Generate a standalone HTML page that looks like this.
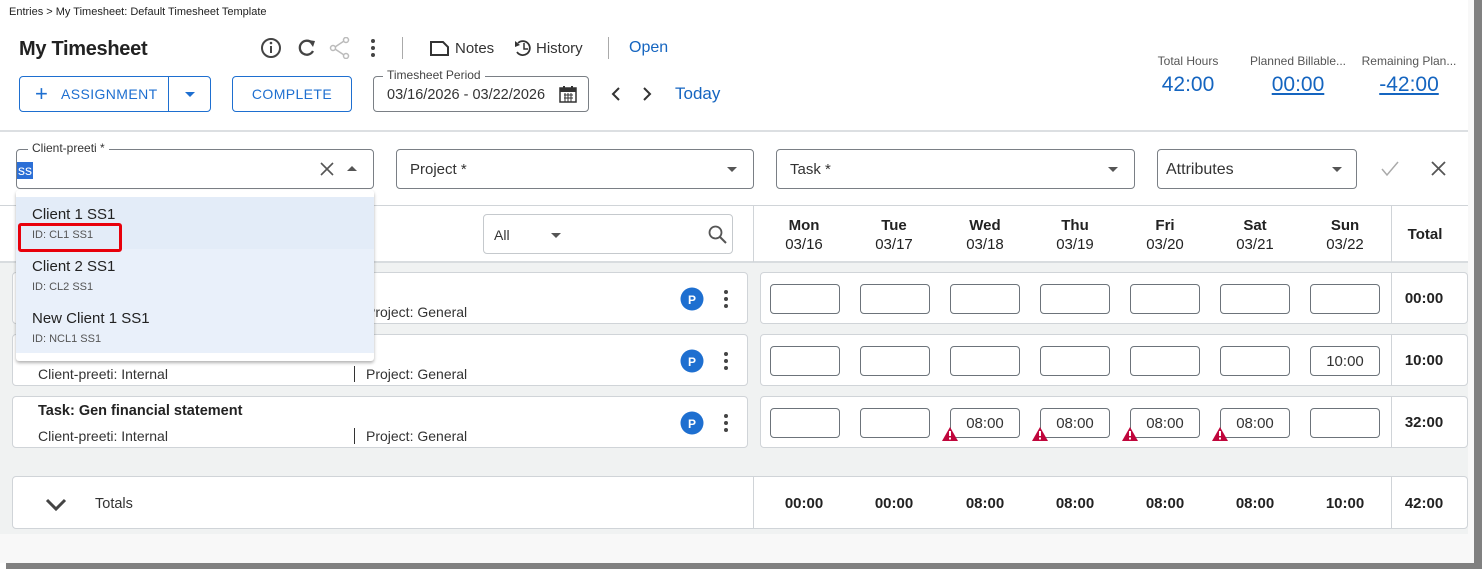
<!DOCTYPE html>
<html><head><meta charset="utf-8">
<style>
*{box-sizing:border-box;margin:0;padding:0}
body{width:1482px;height:569px;overflow:hidden;background:#fff;font-family:"Liberation Sans",sans-serif;color:#222;position:relative}
.a{position:absolute}
.blue{color:#1565c0}
.fld{position:absolute;border:1px solid #7a7f85;border-radius:4px;background:#fff}
.caret{position:absolute;width:0;height:0;border-left:5px solid transparent;border-right:5px solid transparent;border-top:5px solid #555}
.card{position:absolute;background:#fff;border:1px solid #d0d4d8;border-radius:4px}
.inp{position:absolute;width:70px;height:30px;border:1px solid #6c737a;border-radius:4px;background:#fff;font-size:15px;color:#333;text-align:center;line-height:28px}
.day{position:absolute;top:216px;width:80px;text-align:center;font-size:15px;font-weight:bold;line-height:19px;color:#222}
.tot{position:absolute;width:70px;text-align:center;font-size:15px;font-weight:bold}
.warn{position:absolute;width:16px;height:14px}
.sub{font-size:14px;color:#333}
</style></head><body>
<div class="a" style="left:0;top:262px;width:1468px;height:272px;background:#f0f2f2"></div>
<div class="a" style="left:0;top:534px;width:1474px;height:29px;background:#f8f8f8"></div>
<div class="a" style="left:1468px;top:0;width:6px;height:563px;background:#f8f8f8"></div>
<div class="a" style="left:1474px;top:0;width:8px;height:569px;background:#808080"></div>
<div class="a" style="left:6px;top:563px;width:1476px;height:6px;background:#808080"></div>

<div class="a" style="left:9px;top:6px;font-size:11px;color:#222">Entries &gt; My Timesheet: Default Timesheet Template</div>
<div class="a" style="left:19px;top:38px;font-size:20px;font-weight:bold;color:#222;letter-spacing:-0.3px">My Timesheet</div>

<svg class="a" style="left:260px;top:37px" width="420" height="22">
 <circle cx="11" cy="11" r="9" fill="none" stroke="#444" stroke-width="2"/><rect x="10" y="9" width="2" height="7" fill="#444"/><circle cx="11" cy="6" r="1.3" fill="#444"/>
 <path d="M52 6 A7 7 0 1 0 53 14" fill="none" stroke="#444" stroke-width="2.3"/><path d="M48 3 L55 4 L53 10 Z" fill="#444"/>
 <g stroke="#bbb" stroke-width="1.5" fill="none"><circle cx="86" cy="3" r="2.5"/><circle cx="73" cy="11" r="2.5"/><circle cx="86" cy="19" r="2.5"/><path d="M84 4 L75 10 M75 12 L84 18"/></g>
 <circle cx="113" cy="4" r="2" fill="#444"/><circle cx="113" cy="11" r="2" fill="#444"/><circle cx="113" cy="18" r="2" fill="#444"/>
 <rect x="142" y="0" width="1" height="22" fill="#aaa"/>
 <path d="M171 5 L183 5 L188 10 L188 18 L171 18 Z" fill="none" stroke="#333" stroke-width="2"/>
 <path d="M258 6 A7 7 0 1 1 257 15" fill="none" stroke="#333" stroke-width="1.8"/><path d="M255 4 L255 10 L260 8" fill="#333"/><path d="M264 6 L264 12 L268 12" fill="none" stroke="#333" stroke-width="1.5"/>
 <rect x="348" y="0" width="1" height="22" fill="#aaa"/>
</svg>
<div class="a" style="left:455px;top:40px;font-size:15px;color:#333">Notes</div>
<div class="a" style="left:536px;top:40px;font-size:15px;color:#333">History</div>
<div class="a blue" style="left:629px;top:39px;font-size:16px">Open</div>

<div class="a" style="left:19px;top:76px;width:192px;height:36px;border:1px solid #1e6fd0;border-radius:4px"></div>
<div class="a" style="left:168px;top:76px;width:1px;height:36px;background:#1e6fd0"></div>
<div class="a" style="left:35px;top:84px;font-size:22px;color:#1e6fd0;line-height:20px">+</div>
<div class="a" style="left:61px;top:86px;font-size:14px;color:#1e6fd0;letter-spacing:0.4px">ASSIGNMENT</div>
<div class="caret" style="left:185px;top:92px;border-top-color:#1e6fd0"></div>
<div class="a" style="left:232px;top:76px;width:120px;height:36px;border:1px solid #1e6fd0;border-radius:4px;font-size:14px;color:#1e6fd0;text-align:center;line-height:34px;letter-spacing:0.4px">COMPLETE</div>
<div class="fld" style="left:373px;top:76px;width:216px;height:36px"></div>
<div class="a" style="left:383px;top:68px;padding:0 4px;background:#fff;font-size:12px;color:#444">Timesheet Period</div>
<div class="a" style="left:387px;top:87px;font-size:14.5px;color:#333">03/16/2026 - 03/22/2026</div>
<svg class="a" style="left:559px;top:85px" width="18" height="18"><rect x="1" y="3" width="16" height="14" fill="none" stroke="#333" stroke-width="1.5"/><rect x="1" y="3" width="16" height="4" fill="#333"/><path d="M5 10h9M5 13h9M6 8v9M9 8v9M12 8v9" stroke="#333" stroke-width="1"/><rect x="4" y="1" width="2" height="4" fill="#333"/><rect x="12" y="1" width="2" height="4" fill="#333"/></svg>
<svg class="a" style="left:608px;top:86px" width="50" height="16"><path d="M11 2 L5 8 L11 14" fill="none" stroke="#333" stroke-width="2"/><path d="M36 2 L42 8 L36 14" fill="none" stroke="#333" stroke-width="2"/></svg>
<div class="a blue" style="left:675px;top:84px;font-size:17px">Today</div>

<div class="a" style="left:1138px;top:54px;width:100px;text-align:center;font-size:12px;color:#555">Total Hours</div>
<div class="a blue" style="left:1138px;top:73px;width:100px;text-align:center;font-size:21px">42:00</div>
<div class="a" style="left:1243px;top:54px;width:110px;text-align:center;font-size:12px;color:#555">Planned Billable...</div>
<div class="a blue" style="left:1243px;top:73px;width:110px;text-align:center;font-size:21px;text-decoration:underline">00:00</div>
<div class="a" style="left:1355px;top:54px;width:108px;text-align:center;font-size:12px;color:#555">Remaining Plan...</div>
<div class="a blue" style="left:1355px;top:73px;width:108px;text-align:center;font-size:21px;text-decoration:underline">-42:00</div>

<div class="a" style="left:0;top:130px;width:1468px;height:2px;background:#dcdfe2"></div>

<div class="fld" style="left:16px;top:149px;width:358px;height:40px"></div>
<div class="a" style="left:28px;top:141px;padding:0 4px;background:#fff;font-size:12px;color:#333">Client-preeti *</div>
<div class="a" style="left:17px;top:162px;background:#2c6fd6;color:#fff;font-size:14px;line-height:17px;padding:0 1px">ss</div>
<svg class="a" style="left:320px;top:162px" width="14" height="14"><path d="M1 1L13 13M13 1L1 13" stroke="#555" stroke-width="1.6"/></svg>
<div class="a" style="left:347px;top:166px;width:0;height:0;border-left:5px solid transparent;border-right:5px solid transparent;border-bottom:5px solid #555"></div>
<div class="fld" style="left:396px;top:149px;width:358px;height:40px"></div>
<div class="a" style="left:410px;top:161px;font-size:15px;color:#333">Project *</div>
<div class="caret" style="left:727px;top:167px"></div>
<div class="fld" style="left:776px;top:149px;width:359px;height:40px"></div>
<div class="a" style="left:790px;top:161px;font-size:15px;color:#333">Task *</div>
<div class="caret" style="left:1108px;top:167px"></div>
<div class="fld" style="left:1157px;top:149px;width:200px;height:40px"></div>
<div class="a" style="left:1166px;top:161px;font-size:16px;color:#333">Attributes</div>
<div class="caret" style="left:1332px;top:167px"></div>
<svg class="a" style="left:1380px;top:160px" width="70" height="18"><path d="M2 9 L7 15 L18 2" fill="none" stroke="#aaa" stroke-width="1.5"/><path d="M52 2L65 15M65 2L52 15" stroke="#555" stroke-width="1.8"/></svg>

<div class="a" style="left:0;top:205px;width:1468px;height:1px;background:#d0d4d8"></div>
<div class="a" style="left:0;top:261px;width:1468px;height:2px;background:#d8dcdf"></div>
<div class="a" style="left:753px;top:206px;width:1px;height:56px;background:#d0d4d8"></div>
<div class="a" style="left:1391px;top:206px;width:1px;height:56px;background:#d0d4d8"></div>
<div class="fld" style="left:483px;top:214px;width:250px;height:40px;border-color:#c5c9cd"></div>
<div class="a" style="left:494px;top:227px;font-size:14px;color:#333">All</div>
<div class="caret" style="left:551px;top:233px"></div>
<svg class="a" style="left:708px;top:225px" width="20" height="20"><circle cx="7.5" cy="7.5" r="6" fill="none" stroke="#555" stroke-width="1.8"/><path d="M12 12 L18 18" stroke="#555" stroke-width="2"/></svg>
<div class="day" style="left:764px">Mon<br><span style="font-weight:normal">03/16</span></div>
<div class="day" style="left:854px">Tue<br><span style="font-weight:normal">03/17</span></div>
<div class="day" style="left:945px">Wed<br><span style="font-weight:normal">03/18</span></div>
<div class="day" style="left:1035px">Thu<br><span style="font-weight:normal">03/19</span></div>
<div class="day" style="left:1125px">Fri<br><span style="font-weight:normal">03/20</span></div>
<div class="day" style="left:1215px">Sat<br><span style="font-weight:normal">03/21</span></div>
<div class="day" style="left:1305px">Sun<br><span style="font-weight:normal">03/22</span></div>
<div class="a" style="left:1394px;top:226px;width:62px;text-align:center;font-size:15px;font-weight:bold">Total</div>

<div class="card" style="left:12px;top:272px;width:736px;height:52px"></div>
<div class="card" style="left:760px;top:272px;width:708px;height:52px"></div>
<div class="card" style="left:12px;top:334px;width:736px;height:52px"></div>
<div class="card" style="left:760px;top:334px;width:708px;height:52px"></div>
<div class="card" style="left:12px;top:396px;width:736px;height:52px"></div>
<div class="card" style="left:760px;top:396px;width:708px;height:52px"></div>
<div class="a" style="left:1391px;top:272px;width:1px;height:52px;background:#d0d4d8"></div>
<div class="a" style="left:1391px;top:334px;width:1px;height:52px;background:#d0d4d8"></div>
<div class="a" style="left:1391px;top:396px;width:1px;height:52px;background:#d0d4d8"></div>

<div class="a sub" style="left:366px;top:304px">Project: General</div>
<div class="a sub" style="left:38px;top:366px">Client-preeti: Internal</div>
<div class="a" style="left:354px;top:366px;width:1px;height:16px;background:#333"></div>
<div class="a sub" style="left:366px;top:366px">Project: General</div>
<div class="a" style="left:38px;top:403px;font-size:14.5px;font-weight:bold;color:#222">Task: Gen financial statement</div>
<div class="a sub" style="left:38px;top:428px">Client-preeti: Internal</div>
<div class="a" style="left:354px;top:428px;width:1px;height:16px;background:#333"></div>
<div class="a sub" style="left:366px;top:428px">Project: General</div>

<svg class="a" style="left:680px;top:287px" width="60" height="150">
 <g>
 <circle cx="12" cy="12" r="11.5" fill="#1e6fd0"/><text x="12" y="17" text-anchor="middle" font-size="12" font-weight="bold" fill="#fff" font-family="Liberation Sans">P</text>
 <circle cx="46" cy="5" r="2" fill="#444"/><circle cx="46" cy="12" r="2" fill="#444"/><circle cx="46" cy="19" r="2" fill="#444"/>
 </g>
 <g transform="translate(0,62)">
 <circle cx="12" cy="12" r="11.5" fill="#1e6fd0"/><text x="12" y="17" text-anchor="middle" font-size="12" font-weight="bold" fill="#fff" font-family="Liberation Sans">P</text>
 <circle cx="46" cy="5" r="2" fill="#444"/><circle cx="46" cy="12" r="2" fill="#444"/><circle cx="46" cy="19" r="2" fill="#444"/>
 </g>
 <g transform="translate(0,124)">
 <circle cx="12" cy="12" r="11.5" fill="#1e6fd0"/><text x="12" y="17" text-anchor="middle" font-size="12" font-weight="bold" fill="#fff" font-family="Liberation Sans">P</text>
 <circle cx="46" cy="5" r="2" fill="#444"/><circle cx="46" cy="12" r="2" fill="#444"/><circle cx="46" cy="19" r="2" fill="#444"/>
 </g>
</svg>

<div class="inp" style="left:770px;top:284px"></div><div class="inp" style="left:860px;top:284px"></div><div class="inp" style="left:950px;top:284px"></div><div class="inp" style="left:1040px;top:284px"></div><div class="inp" style="left:1130px;top:284px"></div><div class="inp" style="left:1220px;top:284px"></div><div class="inp" style="left:1310px;top:284px"></div>
<div class="tot" style="left:1389px;top:290px">00:00</div>
<div class="inp" style="left:770px;top:346px"></div><div class="inp" style="left:860px;top:346px"></div><div class="inp" style="left:950px;top:346px"></div><div class="inp" style="left:1040px;top:346px"></div><div class="inp" style="left:1130px;top:346px"></div><div class="inp" style="left:1220px;top:346px"></div><div class="inp" style="left:1310px;top:346px;line-height:30px">10:00</div>
<div class="tot" style="left:1389px;top:352px">10:00</div>
<div class="inp" style="left:770px;top:408px"></div><div class="inp" style="left:860px;top:408px"></div><div class="inp" style="left:950px;top:408px;line-height:30px">08:00</div><div class="inp" style="left:1040px;top:408px;line-height:30px">08:00</div><div class="inp" style="left:1130px;top:408px;line-height:30px">08:00</div><div class="inp" style="left:1220px;top:408px;line-height:30px">08:00</div><div class="inp" style="left:1310px;top:408px"></div>
<div class="tot" style="left:1389px;top:414px">32:00</div>
<svg class="warn" style="left:942px;top:427px" viewBox="0 0 16 14"><path d="M8 0 L16 14 L0 14 Z" fill="#c0063c"/><rect x="7" y="4" width="2" height="5" fill="#fff"/><rect x="7" y="10.5" width="2" height="2" fill="#fff"/></svg>
<svg class="warn" style="left:1032px;top:427px" viewBox="0 0 16 14"><path d="M8 0 L16 14 L0 14 Z" fill="#c0063c"/><rect x="7" y="4" width="2" height="5" fill="#fff"/><rect x="7" y="10.5" width="2" height="2" fill="#fff"/></svg>
<svg class="warn" style="left:1122px;top:427px" viewBox="0 0 16 14"><path d="M8 0 L16 14 L0 14 Z" fill="#c0063c"/><rect x="7" y="4" width="2" height="5" fill="#fff"/><rect x="7" y="10.5" width="2" height="2" fill="#fff"/></svg>
<svg class="warn" style="left:1212px;top:427px" viewBox="0 0 16 14"><path d="M8 0 L16 14 L0 14 Z" fill="#c0063c"/><rect x="7" y="4" width="2" height="5" fill="#fff"/><rect x="7" y="10.5" width="2" height="2" fill="#fff"/></svg>

<div class="card" style="left:12px;top:476px;width:1456px;height:53px"></div>
<div class="a" style="left:753px;top:476px;width:1px;height:53px;background:#d0d4d8"></div>
<div class="a" style="left:1391px;top:476px;width:1px;height:53px;background:#d0d4d8"></div>
<svg class="a" style="left:45px;top:498px" width="22" height="14"><path d="M2 2 L11 11 L20 2" fill="none" stroke="#444" stroke-width="3"/></svg>
<div class="a" style="left:95px;top:496px;font-size:14.5px;color:#333">Totals</div>
<div class="tot" style="left:769px;top:495px">00:00</div><div class="tot" style="left:859px;top:495px">00:00</div><div class="tot" style="left:950px;top:495px">08:00</div><div class="tot" style="left:1040px;top:495px">08:00</div><div class="tot" style="left:1130px;top:495px">08:00</div><div class="tot" style="left:1220px;top:495px">08:00</div><div class="tot" style="left:1310px;top:495px">10:00</div><div class="tot" style="left:1389px;top:495px">42:00</div>

<div class="a" style="left:16px;top:190px;width:358px;height:171px;background:#fff;border-radius:3px;box-shadow:0 2px 3px rgba(0,0,0,0.3)"></div>
<div class="a" style="left:16px;top:197px;width:358px;height:52px;background:#e3ecf8"></div>
<div class="a" style="left:16px;top:249px;width:358px;height:104px;background:#e9f0fa"></div>
<div class="a" style="left:32px;top:206px;font-size:15px;color:#222">Client 1 SS1</div>
<div class="a" style="left:32px;top:229px;font-size:11px;color:#555">ID: CL1 SS1</div>
<div class="a" style="left:18px;top:223px;width:104px;height:29px;border:3px solid #e8000b;border-radius:3px"></div>
<div class="a" style="left:32px;top:258px;font-size:15px;color:#222">Client 2 SS1</div>
<div class="a" style="left:32px;top:281px;font-size:11px;color:#555">ID: CL2 SS1</div>
<div class="a" style="left:32px;top:310px;font-size:15px;color:#222">New Client 1 SS1</div>
<div class="a" style="left:32px;top:333px;font-size:11px;color:#555">ID: NCL1 SS1</div>
</body></html>
